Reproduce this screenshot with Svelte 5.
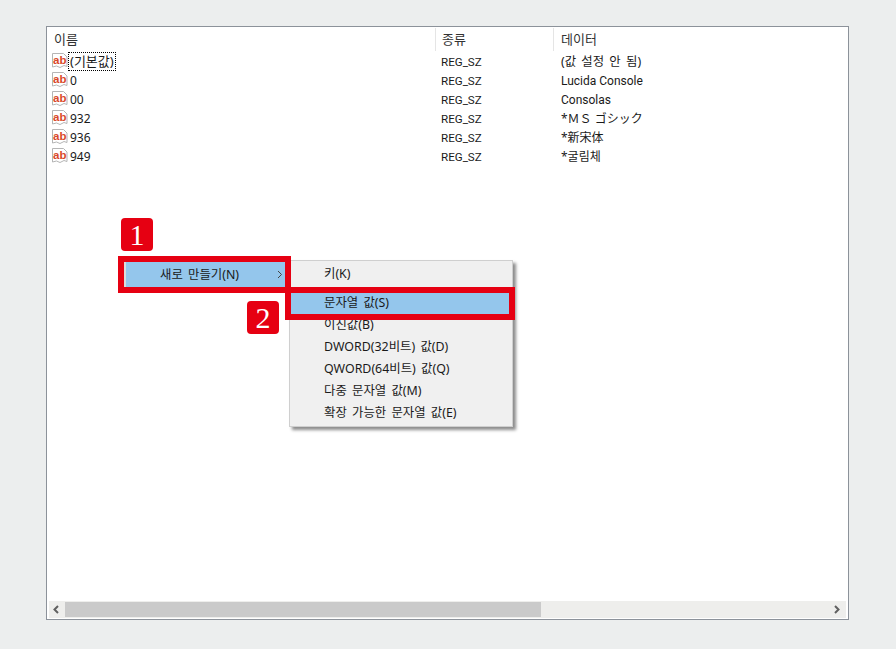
<script>
  const rows = [
    ['(기본값)', '(값 설정 안 됨)', 'wide'],
    ['0', 'Lucida Console', 'latin'],
    ['00', 'Consolas', 'latin'],
    ['932', '*ＭＳ ゴシック', 'cjk'],
    ['936', '*新宋体', 'cjk'],
    ['949', '*굴림체', 'cjk']
  ];
  const items = [
    { t: '문자열 값(S)', hi: true },
    { t: '이진값(B)' },
    { t: 'DWORD(32비트) 값(D)' },
    { t: 'QWORD(64비트) 값(Q)' },
    { t: '다중 문자열 값(M)' },
    { t: '확장 가능한 문자열 값(E)' }
  ];
</script>

<div class="page">
  <div class="win">
    <div class="head">
      <div class="h c1">이름</div>
      <div class="h c2">종류</div>
      <div class="h c3">데이터</div>
    </div>
    <div class="list">
      {#each rows as r, i}
        <div class="row">
          <div class="name">
            <svg class="ic" width="17" height="17" viewBox="0 0 17 17">
              <path d="M1.5 0.5H12.5L16 4V13.5L13 12.5L9 14.5L5.5 13L1.5 14Z" fill="#fff" stroke="#b5b5b5"/>
              <text x="2" y="10.5" class="ab">ab</text>
            </svg>
            <span class="label" class:focus={i === 0}>{r[0]}</span>
          </div>
          <div class="type">REG_SZ</div>
          <div class="data {r[2]}">{r[1]}</div>
        </div>
      {/each}
    </div>
    <div class="scroll">
      <svg class="arrow" width="8" height="9" viewBox="0 0 8 9"><path d="M6 1L2.5 4.5L6 8" fill="none" stroke="#606060" stroke-width="2"/></svg>
      <div class="thumb"></div>
      <svg class="arrow right" width="8" height="9" viewBox="0 0 8 9"><path d="M2 1L5.5 4.5L2 8" fill="none" stroke="#606060" stroke-width="2"/></svg>
    </div>
  </div>

  <div class="menu1"><span>새로 만들기(N)</span><svg width="6" height="9" viewBox="0 0 6 9"><path d="M1 1L4.5 4.5L1 8" fill="none" stroke="#444" stroke-width="1"/></svg></div>
  <div class="menu2">
    <div class="mi">키(K)</div>
    <div class="sep"></div>
    {#each items as it}
      <div class="mi" class:hi={it.hi}>{it.t}</div>
    {/each}
  </div>
  <div class="frame f1"></div>
  <div class="frame f2"></div>
  <div class="badge b1">1</div>
  <div class="badge b2">2</div>
</div>

<style>
  :global(body) { margin: 0; }
  .page {
    position: relative;
    width: 896px;
    height: 649px;
    background: #eceeee;
    padding: 26px 47px 29px 46px;
    box-sizing: border-box;
    overflow: hidden;
    font-family: "Noto Sans", "Noto Sans CJK KR", sans-serif;
    font-size: 12.4px;
    word-spacing: 2px;
    color: #1a1a1a;
  }
  .win {
    height: 594px;
    box-sizing: border-box;
    background: #fff;
    border: 1px solid #8c929a;
    display: flex;
    flex-direction: column;
  }
  .head { display: flex; height: 24px; padding-top: 1px; box-sizing: border-box; }
  .h { height: 23px; line-height: 22px; padding-left: 7px; box-sizing: border-box; color: #333; border-right: 1px solid #e5e5e5; font-size: 13px; }
  .c1 { width: 389px; }
  .c2 { width: 118px; padding-left: 6px; }
  .c3 { flex: 1; border-right: 0; }
  .list { flex: 1; padding-top: 1px; }
  .row { display: flex; height: 19px; line-height: 19px; font-size: 12px; word-spacing: 0; }
  .name { width: 394px; padding-left: 4px; box-sizing: border-box; display: flex; align-items: center; }
  .ic { flex: none; }
  .ab { font-family: "Liberation Sans", sans-serif; font-size: 11.5px; font-weight: 700; fill: #d9492a; }
  .label { display: block; height: 19px; line-height: 19px; padding: 0 2px 0 1px; box-sizing: border-box; border: solid transparent; border-width: 0 1px; }
  .label.focus { outline: 1px dotted #000; outline-offset: -1px; padding: 0 1px; font-size: 13px; }
  .type { width: 120px; font-family: Roboto, sans-serif; font-size: 11.6px; padding-top: 1px; box-sizing: border-box; }
  .data { flex: 1; }
  .data.latin { font-family: Roboto, sans-serif; font-size: 12px; padding-top: 1px; }
  .data.wide { font-size: 12.4px; word-spacing: 2px; }
  .scroll {
    height: 17px;
    margin: 0 2px 1px 2px;
    background: #eeeeec;
    display: flex;
    align-items: center;
  }
  .arrow { flex: none; margin: 0 5px 0 3px; }
  .arrow.right { margin: 0 5px 0 auto; }
  .thumb { width: 476px; height: 15px; background: #cacaca; }
  .menu1 {
    position: absolute; left: 124px; top: 262px; width: 161px; height: 25px;
    background: #94c6ec; display: flex; align-items: center; justify-content: space-between;
    box-sizing: border-box; padding: 0 2px 0 34px; line-height: 21px; border-left: 2px solid #dcdcdc;
  }
  .menu2 {
    position: absolute; left: 289px; top: 260px; width: 224px; height: 167px;
    box-sizing: border-box; background: #f0f0f0; border: 1px solid #cfcfcf;
    box-shadow: 3px 3px 3px rgba(0,0,0,0.45); padding: 2px 0;
    display: flex; flex-direction: column;
  }
  .mi { height: 22px; line-height: 21px; padding-left: 34px; flex: none; }
  .mi.hi { background: #94c6ec; }
  .sep { height: 7px; flex: none; }
  .frame { position: absolute; box-sizing: border-box; border: 6px solid #e60012; }
  .f1 { left: 118px; top: 256px; width: 173px; height: 37px; }
  .f2 { left: 285px; top: 287px; width: 230px; height: 33px; }
  .badge {
    position: absolute; width: 32px; height: 33px; border-radius: 4px;
    background: #e60012; color: #fff; text-align: center;
    font-family: "Liberation Serif", serif; font-size: 30px; line-height: 33px;
  }
  .b1 { left: 121px; top: 218px; }
  .b2 { left: 247px; top: 301px; }
</style>
